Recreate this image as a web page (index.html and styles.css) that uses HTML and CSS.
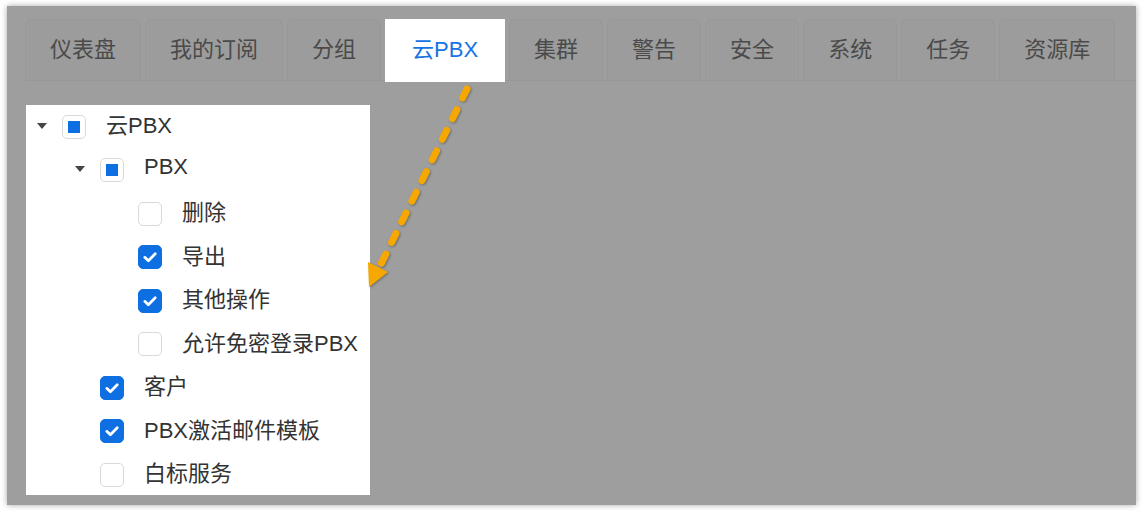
FILE: index.html
```html
<!DOCTYPE html>
<html lang="zh-CN">
<head>
    <meta charset="UTF-8">
    <meta name="viewport" content="width=device-width, initial-scale=1.0">
    <title>云PBX 权限</title>
    <link rel="stylesheet" href="styles.css">
</head>
<body>
<div class="panel">
    <div class="tabs">
        <div class="tab">仪表盘</div>
        <div class="tab">我的订阅</div>
        <div class="tab">分组</div>
        <div class="tab active">云PBX</div>
        <div class="tab">集群</div>
        <div class="tab">警告</div>
        <div class="tab">安全</div>
        <div class="tab">系统</div>
        <div class="tab">任务</div>
        <div class="tab">资源库</div>
    </div>

    <div class="tree">
        <div class="node level-0">
            <span class="caret"></span>
            <span class="check half"></span>
            <span class="label">云PBX</span>
        </div>
        <div class="node level-1">
            <span class="caret"></span>
            <span class="check half"></span>
            <span class="label">PBX</span>
        </div>
        <div class="node level-2">
            <span class="caret empty"></span>
            <span class="check"></span>
            <span class="label">删除</span>
        </div>
        <div class="node level-2">
            <span class="caret empty"></span>
            <span class="check on"><svg viewBox="0 0 24 24"><path d="M6.3 12.4l3.9 3.7 7.5-7.6"/></svg></span>
            <span class="label">导出</span>
        </div>
        <div class="node level-2">
            <span class="caret empty"></span>
            <span class="check on"><svg viewBox="0 0 24 24"><path d="M6.3 12.4l3.9 3.7 7.5-7.6"/></svg></span>
            <span class="label">其他操作</span>
        </div>
        <div class="node level-2">
            <span class="caret empty"></span>
            <span class="check"></span>
            <span class="label">允许免密登录PBX</span>
        </div>
        <div class="node level-1">
            <span class="caret empty"></span>
            <span class="check on"><svg viewBox="0 0 24 24"><path d="M6.3 12.4l3.9 3.7 7.5-7.6"/></svg></span>
            <span class="label">客户</span>
        </div>
        <div class="node level-1">
            <span class="caret empty"></span>
            <span class="check on"><svg viewBox="0 0 24 24"><path d="M6.3 12.4l3.9 3.7 7.5-7.6"/></svg></span>
            <span class="label">PBX激活邮件模板</span>
        </div>
        <div class="node level-1">
            <span class="caret empty"></span>
            <span class="check"></span>
            <span class="label">白标服务</span>
        </div>
    </div>
</div>

<!-- 标注箭头 -->
<svg class="arrow" viewBox="0 0 1143 511">
    <line x1="467" y1="89" x2="381" y2="264"/>
    <polygon points="369,287 388,272 368,262"/>
</svg>
</body>
</html>
```

FILE: styles.css
```css
body {
    margin: 0;
    padding: 0;
    position: relative;
    background: #ffffff;
    font-family: "Liberation Sans", "Noto Sans CJK SC", sans-serif;
    color: #333;
}

.panel {
    height: 499px;
    margin: 6px 7px;
    padding: 13px 0 0 18px;
    box-sizing: border-box;
    background: #9e9e9e;
    box-shadow: 0 0 6px rgba(0, 0, 0, 0.35);
}

.tabs {
    display: flex;
    align-items: flex-end;
    height: 61px;
    border-bottom: 1px solid #979797;
}

.tab {
    height: 61px;
    box-sizing: border-box;
    margin-right: 4px;
    padding: 0 24px 6px;
    display: flex;
    align-items: center;
    border: 1px solid #989898;
    border-bottom: none;
    border-radius: 6px 6px 0 0;
    background: #9c9c9c;
    font-size: 22px;
    color: #4a4a4a;
}

.tab.active {
    height: 63px;
    margin-bottom: -2px;
    padding: 0 26px 8px;
    background: #ffffff;
    border-color: #ffffff;
    border-radius: 0;
    color: #1673e6;
}

.tree {
    width: 344px;
    height: 390px;
    margin: 24px 0 0 1px;
    background: #ffffff;
    overflow: hidden;
}

.node {
    height: 43.5px;
    display: flex;
    align-items: center;
    padding-left: 8px;
    font-size: 22px;
}

.level-1 {
    padding-left: 46px;
}

.level-2 {
    padding-left: 84px;
}

.caret {
    width: 28px;
    height: 24px;
    position: relative;
    flex-shrink: 0;
}

.caret::after {
    content: "";
    position: absolute;
    left: 3px;
    top: 8px;
    border-left: 5.5px solid transparent;
    border-right: 5.5px solid transparent;
    border-top: 6px solid #444;
}

.caret.empty::after {
    display: none;
}

.check {
    width: 24px;
    height: 24px;
    box-sizing: border-box;
    flex-shrink: 0;
    display: flex;
    align-items: center;
    justify-content: center;
    margin-right: 20px;
    border: 1px solid #d9d9d9;
    border-radius: 5px;
    background: #ffffff;
}

.check.half::after {
    content: "";
    width: 12px;
    height: 12px;
    background: #0e6fe3;
}

.check.on {
    border-color: #0e6fe3;
    background: #0e6fe3;
}

.check svg {
    width: 24px;
    height: 24px;
    fill: none;
    stroke: #ffffff;
    stroke-width: 3;
    stroke-linecap: round;
    stroke-linejoin: round;
}

.label {
    margin-bottom: 7px;
    white-space: nowrap;
}

.arrow {
    position: absolute;
    left: 0;
    top: 0;
    width: 1143px;
    height: 511px;
    pointer-events: none;
    filter: drop-shadow(1px 1px 1px rgba(0, 0, 0, 0.3));
}

.arrow line {
    stroke: #f6a800;
    stroke-width: 7;
    stroke-linecap: round;
    stroke-dasharray: 10 13;
}

.arrow polygon {
    fill: #f6a800;
}
```
